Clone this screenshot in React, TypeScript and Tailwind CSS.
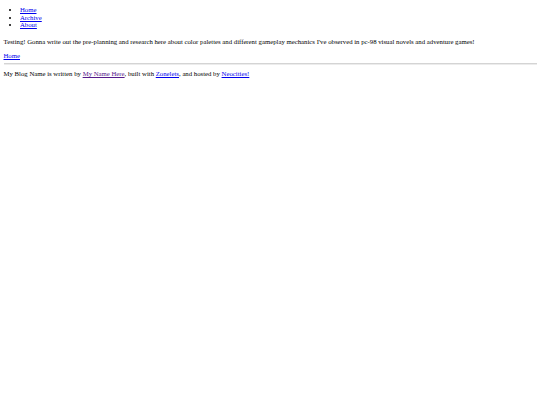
export default function App() {
  const link = 'text-[#0000ee] underline decoration-[0.5px] underline-offset-[1px]'
  return (
    <div className="min-h-screen bg-white px-[3.5px] pt-[6.25px] text-[6.75px] leading-[7.5px] text-black font-['Liberation_Serif',serif]">
      <ul className="list-disc pl-[16.5px]">
        <li>
          <a href="#" className={link}>Home</a>
        </li>
        <li>
          <a href="#" className={link}>Archive</a>
        </li>
        <li>
          <a href="#" className={link}>About</a>
        </li>
      </ul>

      <p className="mt-[9.5px]">
        Testing! Gonna write out the pre-planning and research here about color palettes and different gameplay
        mechanics I've observed in pc-98 visual novels and adventure games!
      </p>

      <div className="mt-[6.5px]">
        <a href="#" className={link}>Home</a>
      </div>

      <hr className="mt-[3px] h-0 border-t border-b border-t-[#d4d4d4] border-b-[#ececec]" />

      <p className="mt-[5.25px]">
        My Blog Name is written by{' '}
        <a href="#" className="text-[#551a8b] underline decoration-[0.5px] underline-offset-[1px]">My Name Here</a>, built with{' '}
        <a href="#" className={link}>Zonelets</a>, and hosted by{' '}
        <a href="#" className={link}>Neocities!</a>
      </p>
    </div>
  )
}
